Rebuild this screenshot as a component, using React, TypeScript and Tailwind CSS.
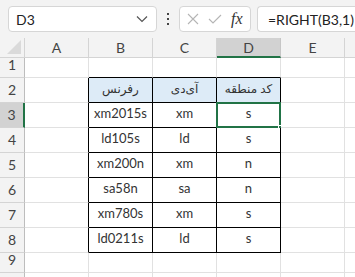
import React from "react";

const cols = ["A", "B", "C", "D", "E", ""];
const colW = [64, 64, 64, 64, 64, 64];

const data: Record<number, string[]> = {
  2: ["رفرنس", "آی‌دی", "کد منطقه"],
  3: ["xm2015s", "xm", "s"],
  4: ["ld105s", "ld", "s"],
  5: ["xm200n", "xm", "n"],
  6: ["sa58n", "sa", "n"],
  7: ["xm780s", "xm", "s"],
  8: ["ld0211s", "ld", "s"],
};

const rowH = (r: number) => (r >= 2 && r <= 8 ? 25 : 20);

const font = { fontFamily: "Lato, 'DejaVu Sans', sans-serif" };

const Cell = ({ r, c }: { r: number; c: number }) => {
  // c: 0=A,1=B,...
  const inTable = r >= 2 && r <= 8 && c >= 1 && c <= 3;
  const rightBlack = r >= 2 && r <= 8 && c >= 0 && c <= 3;
  const bottomBlack = r >= 1 && r <= 8 && c >= 1 && c <= 3;
  const text = inTable ? data[r][c - 1] : "";
  const header = r === 2 && inTable;
  const selected = r === 3 && c === 3;
  return (
    <div
      className={`relative shrink-0 flex items-end justify-center pb-[4px] border-r border-b text-[13px] text-[#333] ${
        rightBlack ? "border-r-black" : "border-r-[#e1e1e1]"
      } ${bottomBlack ? "border-b-black" : "border-b-[#e1e1e1]"} ${
        header ? "bg-[#ddebf7]" : "bg-white"
      }`}
      style={{ width: colW[c], height: rowH(r) }}
    >
      <span dir="auto" className={header ? "text-[12px]" : ""}>{text}</span>
      {selected && (
        <>
          <div className="absolute left-[-1px] top-[-1px] right-[-1px] bottom-[-1px] border-2 border-[#217346]" />
          <div className="absolute right-[-4px] bottom-[-4px] w-[6px] h-[6px] bg-[#217346] border border-white" />
        </>
      )}
    </div>
  );
};

export default function App() {
  const rows = [1, 2, 3, 4, 5, 6, 7, 8, 9, 10];
  return (
    <div className="w-[355px] h-[277px] overflow-hidden bg-white" style={font}>
      {/* formula toolbar */}
      <div className="h-[38px] bg-[#f3f3f3] flex items-start pt-[6px] pl-[8px]">
        <div className="w-[149px] h-[26px] bg-white border border-[#d6d6d6] rounded-[4px] flex items-center justify-between pl-[7px] pr-[8px]">
          <span className="text-[14px] text-[#222]">D3</span>
          <svg width="12" height="8" viewBox="0 0 12 8">
            <path d="M1 1.5 L6 6.5 L11 1.5" stroke="#555" strokeWidth="1.2" fill="none" />
          </svg>
        </div>
        <div className="w-[22px] h-[26px] flex flex-col items-center justify-center gap-[3px]">
          <div className="w-[2px] h-[2px] bg-[#444]" />
          <div className="w-[2px] h-[2px] bg-[#444]" />
          <div className="w-[2px] h-[2px] bg-[#444]" />
        </div>
        <div className="w-[72px] h-[26px] bg-white border border-[#d6d6d6] rounded-[4px] flex items-center pl-[7px] gap-[9px]">
          <svg width="12" height="12" viewBox="0 0 12 12">
            <path d="M1 1 L11 11 M11 1 L1 11" stroke="#b5b5b5" strokeWidth="1.1" fill="none" />
          </svg>
          <svg width="14" height="12" viewBox="0 0 14 12">
            <path d="M1 6 L5 10 L13 2" stroke="#b5b5b5" strokeWidth="1.1" fill="none" />
          </svg>
          <span
            className="text-[16px] italic text-[#333] leading-none"
            style={{ fontFamily: "'Liberation Serif', serif" }}
          >
            fx
          </span>
        </div>
        <div className="ml-[6px] flex-1 h-[26px] bg-white border border-r-0 border-[#d6d6d6] rounded-l-[4px] flex items-center pl-[10px]">
          <span className="text-[14px] text-[#222]">=RIGHT(B3,1)</span>
        </div>
      </div>

      {/* column headers */}
      <div className="flex h-[20px]">
        <div className="w-[25px] shrink-0 h-[20px] bg-[#f3f3f3] border-r border-b border-[#d4d4d4] relative">
          <svg className="absolute right-[3px] bottom-[3px]" width="14" height="14" viewBox="0 0 14 14">
            <path d="M14 0 L14 14 L0 14 Z" fill="#dadada" />
          </svg>
        </div>
        {cols.map((c, i) => (
          <div
            key={i}
            className={`shrink-0 h-[20px] flex items-center justify-center text-[14px] text-[#444] border-r ${
              c === "D"
                ? "bg-[#d2d2d2] border-b-2 border-b-[#217346] border-r-[#c6c6c6]"
                : "bg-[#f3f3f3] border-b border-[#d4d4d4]"
            }`}
            style={{ width: colW[i] }}
          >
            {c}
          </div>
        ))}
      </div>

      {/* rows */}
      {rows.map((r) => (
        <div key={r} className="flex">
          <div
            className={`w-[25px] shrink-0 flex items-end justify-center pb-[2px] text-[14px] text-[#444] border-b border-[#d4d4d4] ${
              r === 3
                ? "bg-[#d2d2d2] border-r-2 border-r-[#217346]"
                : "bg-[#f3f3f3] border-r border-r-[#bdbdbd]"
            }`}
            style={{ height: rowH(r) }}
          >
            {r < 10 ? r : ""}
          </div>
          {cols.map((c, i) => (
            <Cell key={i} r={r} c={i} />
          ))}
        </div>
      ))}
    </div>
  );
}
